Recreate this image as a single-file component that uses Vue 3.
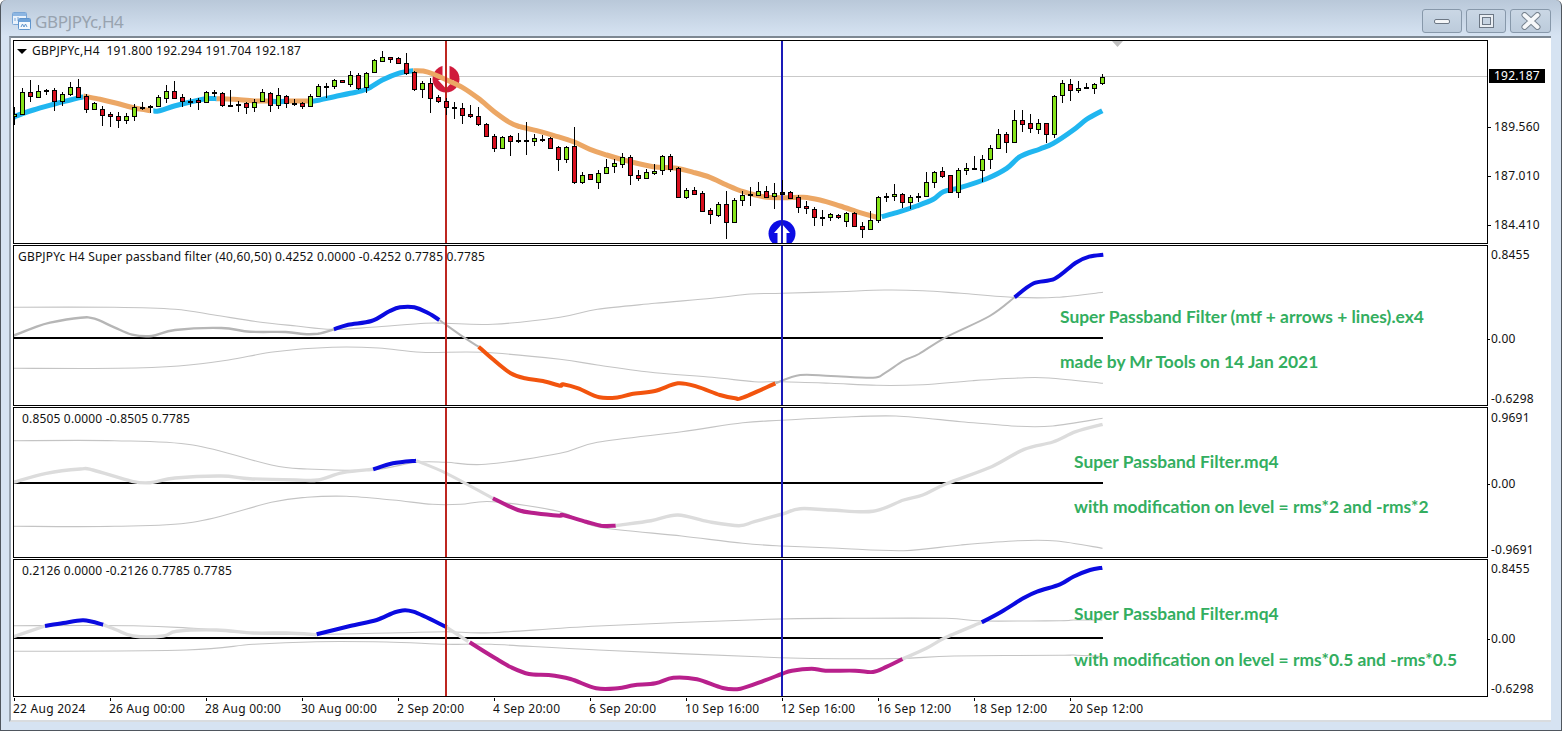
<script setup>
const sx = (ox, kx, oy) => (pts) => pts.map(([x, y]) => [x / kx + ox, y / 3 + oy])
const z1 = sx(0, 3, 0), z3 = sx(520, 3, 60), z2 = sx(1040, 3, 0)
const a6 = sx(0, 2.8, 240), a7 = sx(540, 2.613, 240)
const b4 = sx(0, 3, 540), b9 = sx(440, 2.529, 550), b5 = sx(1040, 3, 540)
// Catmull-Rom through the sampled points, so curves read as smooth indicator lines
const pts = (p) => {
  const f = (v) => v.toFixed(1)
  let d = `M${f(p[0][0])} ${f(p[0][1])}`
  for (let i = 0; i < p.length - 1; i++) {
    const a = p[Math.max(i - 1, 0)], b = p[i], c = p[i + 1], e = p[Math.min(i + 2, p.length - 1)]
    d += `C${f(b[0] + (c[0] - a[0]) / 6)} ${f(b[1] + (c[1] - a[1]) / 6)} ${f(c[0] - (e[0] - b[0]) / 6)} ${f(c[1] - (e[1] - b[1]) / 6)} ${f(c[0])} ${f(c[1])}`
  }
  return d
}

// high, low, body top, body bottom, kind (0 up, 1 down, 2 doji) — in 3x reference coordinates
const candlesA = [[320,375,343,349,0],[265,345,275,343,0],[240,305,275,289,1],[255,295,274,290,0],[267,285,270,273,2],[265,332,271,304,1],[275,318,283,304,0],[247,287,262,281,0],[237,295,262,290,1],[283,338,289,328,1],[305,330,310,328,0],[318,377,328,344,1],[335,380,343,349,1],[335,383,349,361,1],[338,372,349,361,0],[313,362,322,349,0],[307,330,320,323,2],[315,340,319,322,2],[285,322,291,317,0],[255,308,274,295,0],[243,295,274,293,1],[283,320,292,302,1],[295,320,303,305,2],[295,330,301,307,1],[272,310,277,307,0],[270,292,276,279,2],[277,320,280,316,1],[270,322,314,317,2],[303,336,311,314,2],[305,341,309,322,1],[298,336,305,322,0],[268,305,277,304,0],[275,335,278,316,1],[265,328,286,316,0],[285,323,287,310,1],[298,318,309,311,2],[305,326,310,319,1],[283,322,287,319,0],[252,290,259,287,0],[250,293,258,260,2],[238,268,241,259,0],[240,248,241,246,1],[212,262,226,253,0],[218,270,226,263,1],[215,278,218,262,0],[178,220,181,217,0],[153,186,172,184,0],[170,188,172,178,1],[172,193,175,190,1],[160,224,190,218,1],[213,272,217,268,1],[243,293,250,268,0],[235,338,250,293,1],[285,310,291,304,1],[295,345,304,320,1],[305,358,320,322,2],[308,371,325,346,1],[315,355,343,349,1],[322,378,349,373,1],[370,412,373,409,1],[403,455,409,445,1],[408,448,412,445,0],[405,467,409,422,1],[398,428,421,424,2]]
const candlesB = [[185,285,241,244,2],[222,258,233,242,0],[225,245,236,238,2],[232,265,234,263,1],[258,333,262,296,1],[257,310,260,296,0],[200,373,259,365,1],[335,373,346,365,0],[343,358,343,356,1],[330,387,340,365,0],[297,341,320,340,0],[298,338,310,319,0],[280,324,292,311,0],[285,375,292,346,1],[330,362,346,353,1],[327,358,337,353,0],[312,345,332,338,0],[285,345,288,331,0],[283,335,288,326,1],[322,412,324,410,1],[385,418,391,410,0],[382,405,391,403,1],[392,457,400,452,1],[445,491,451,463,1],[425,470,433,464,0],[393,537,433,485,1],[415,487,420,485,0],[392,437,405,421,0],[380,437,403,405,2],[365,407,394,404,0],[378,415,394,411,1],[368,447,400,409,0],[360,402,397,401,2],[392,417,397,413,1],[405,458,411,440,1],[423,463,438,445,1],[442,497,448,472,1],[450,497,470,472,2],[458,482,463,472,0],[462,476,465,472,1],[455,500,460,482,0],[455,502,460,497,1],[487,533,497,506,1],[453,510,481,506,0],[408,490,412,481,0],[398,425,407,411,2],[372,422,403,409,0],[398,443,403,425,1],[405,447,412,425,0],[398,425,408,411,2],[336,412,367,409,0],[332,383,335,367,0],[322,355,334,347,1],[345,400,346,395,1],[323,413,331,395,0],[310,345,325,331,0],[288,328,325,327,2],[285,365,298,329,0],[255,327,265,298,0],[208,267,223,265,0],[215,278,223,245,1],[150,232,181,245,0],[150,215,181,191,1],[162,220,190,205,1],[177,222,190,208,0]]
const candlesC = [[368,428,370,403,1],[285,415,287,403,0],[240,310,250,286,0],[238,302,251,271,1],[243,280,263,271,0],[250,265,260,263,2],[250,281,251,265,0],[223,256,230,250,0]]

const candles = [...candlesA.map((c) => [c, 0]), ...candlesB.map((c) => [c, 60]), ...candlesC.map((c) => [c, 0])].map(([c, off], i) => {
  const y = (v) => v / 3 + off
  const cx = 14.5 + 8 * i
  const top = Math.round(y(c[2])) + 0.5
  const bot = Math.max(Math.round(y(c[3])) + 0.5, top + 1)
  return { cx, hi: Math.round(y(c[0])), lo: Math.round(y(c[1])), top, h: bot - top, fill: ['#86e41a', '#d80f1e', '#111'][c[4]] }
})

const BLUE_MA = '#20b6f0', ORANGE_MA = '#eca765'
const ma = [
  [BLUE_MA, z1([[40, 354], [43, 350], [100, 330], [163, 312], [211, 300], [250, 290]])],
  [ORANGE_MA, z1([[250, 288], [300, 298], [350, 310], [403, 324], [427, 328], [451, 332]])],
  [BLUE_MA, z1([[460, 332], [475, 333], [523, 318], [571, 306], [619, 296], [650, 296]])],
  [ORANGE_MA, z1([[650, 296], [700, 298], [763, 303], [811, 303]])],
  [BLUE_MA, z1([[811, 303], [835, 305], [860, 303]])],
  [ORANGE_MA, z1([[860, 303], [931, 303]])],
  [BLUE_MA, z1([[931, 305], [955, 301], [1003, 290], [1051, 280], [1099, 268], [1147, 240], [1195, 220], [1240, 212]])],
  [ORANGE_MA, [...z1([[1240, 212], [1270, 213], [1300, 222], [1340, 240], [1387, 262], [1435, 295], [1483, 335], [1530, 368], [1560, 380]]), ...z3([[50, 212], [100, 226], [160, 245], [210, 268], [260, 285], [330, 305], [400, 320], [470, 325], [520, 337], [570, 352], [620, 375], [670, 395], [730, 410], [790, 413], [850, 412], [900, 420], [960, 438], [1020, 458], [1070, 472]])]],
  [BLUE_MA, [...z3([[1085, 470], [1130, 458], [1190, 438], [1240, 418], [1270, 395], [1320, 383], [1400, 356], [1460, 325], [1500, 290], [1560, 267]]), ...z2([[40, 430], [100, 390], [140, 358], [187, 332]])]],
].map(([color, p]) => ({ color, d: pts(p) }))

const GREY = '#b6b6b6', LGREY = '#dcdcdc', BLUE = '#0a0ae0', ORANGE = '#f2540e', MAG = '#b8208c'

const curves2 = [
  [GREY, 2.4, a6([[37, 287], [90, 265], [140, 248], [225, 233], [265, 236], [320, 262], [370, 284], [425, 288], [490, 270], [620, 264], [700, 275], [800, 276], [850, 282], [890, 281], [935, 268]])],
  [BLUE, 4, a6([[935, 268], [975, 254], [1040, 243], [1090, 214], [1120, 202], [1160, 202], [1200, 220], [1230, 240]])],
  [GREY, 2, a6([[1230, 240], [1300, 293], [1340, 320]])],
  [ORANGE, 4, [...a6([[1340, 320], [1380, 358], [1430, 400], [1470, 415], [1520, 423], [1568, 437]]), ...a7([[60, 433], [100, 445], [155, 472], [205, 472], [240, 462], [300, 453], [360, 430], [410, 440], [470, 465], [510, 475], [530, 473], [615, 430]])]],
  [GREY, 2, a7([[615, 430], [680, 405], [760, 408], [870, 413], [900, 400], [950, 362], [990, 342], [1060, 292], [1175, 228], [1240, 172]])],
  [BLUE, 4, a7([[1240, 172], [1290, 130], [1345, 116], [1400, 68], [1435, 50], [1472, 44]])],
]
const levels2 = [
  [...a6([[37, 202], [320, 202], [490, 208], [600, 225], [720, 245], [830, 258], [930, 268], [1040, 262], [1190, 250], [1250, 250], [1380, 253], [1568, 232]]), ...a7([[150, 208], [300, 190], [450, 175], [550, 162], [633, 160], [780, 155], [900, 150], [1000, 152], [1100, 160], [1240, 172], [1350, 172], [1471, 157]])],
  [...a6([[37, 385], [330, 385], [500, 378], [640, 360], [770, 335], [930, 322], [1060, 324], [1180, 337], [1350, 337], [1568, 358]]), ...a7([[150, 375], [300, 398], [450, 412], [560, 425], [633, 425], [760, 430], [880, 436], [1000, 434], [1130, 422], [1250, 414], [1330, 414], [1471, 430]])],
]

const curves3 = [
  [LGREY, 3.4, a6([[37, 727], [130, 700], [225, 687], [260, 690], [370, 724], [420, 728], [490, 714], [620, 708], [700, 716], [830, 720], [890, 720], [960, 698], [1045, 688]])],
  [BLUE, 4, a6([[1045, 688], [1100, 670], [1165, 662]])],
  [LGREY, 3, a6([[1165, 662], [1250, 700], [1380, 775]])],
  [MAG, 4, [...a6([[1380, 775], [1450, 810], [1500, 820], [1568, 827]]), ...a7([[60, 825], [120, 845], [160, 857], [198, 857]])]],
  [LGREY, 3.4, a7([[198, 857], [290, 842], [360, 825], [440, 845], [520, 857], [560, 845], [633, 822], [680, 806], [760, 810], [870, 814], [950, 780], [1000, 765], [1060, 732], [1180, 680], [1265, 628], [1340, 606], [1400, 575], [1470, 553]])],
]
const levels3 = [
  [...a6([[37, 602], [320, 602], [540, 615], [760, 675], [860, 687], [1040, 690], [1165, 667], [1250, 667], [1360, 673], [1568, 640]]), ...a7([[150, 607], [370, 575], [530, 548], [633, 541], [780, 532], [930, 528], [1100, 545], [1250, 559], [1340, 558], [1470, 535]])],
  [...a6([[37, 859], [320, 859], [540, 847], [760, 787], [860, 772], [970, 769], [1100, 780], [1210, 793], [1290, 793], [1380, 785], [1568, 815]]), ...a7([[150, 860], [370, 888], [530, 910], [633, 918], [780, 925], [950, 932], [1100, 915], [1250, 902], [1350, 903], [1470, 925]])],
]

const curves4 = [
  [LGREY, 3.4, b4([[40, 290], [135, 258]])],
  [BLUE, 4, b4([[135, 258], [190, 249], [250, 241], [310, 254]])],
  [LGREY, 3.4, b4([[310, 254], [350, 270], [400, 288], [490, 288], [530, 274], [650, 270], [760, 279], [860, 279], [950, 284]])],
  [BLUE, 4, b4([[950, 283], [1050, 258], [1130, 240], [1190, 215], [1240, 215], [1340, 262]])],
  [LGREY, 3.4, b4([[1340, 262], [1405, 305]])],
  [MAG, 4, b9([[75, 277], [140, 325], [180, 352], [225, 372], [275, 375], [330, 387], [395, 415], [450, 415], [490, 406], [545, 400], [590, 383], [650, 388], [715, 414], [760, 416], [820, 392], [864, 372], [890, 362], [940, 356], [975, 362], [1050, 362], [1095, 366], [1130, 350], [1170, 327]])],
  [LGREY, 3.4, b9([[1170, 327], [1230, 295], [1280, 262], [1370, 217]])],
  [BLUE, 4, [...b9([[1370, 217], [1420, 185], [1475, 145], [1510, 125], [1568, 103]]), ...b5([[100, 110], [150, 90], [187, 83]])]],
]
const levels4 = [
  [...b4([[40, 257], [400, 257], [580, 265], [760, 280], [950, 283], [1200, 278], [1340, 275]]), ...b9([[130, 248], [400, 228], [830, 208], [1030, 205], [1280, 205], [1370, 213], [1568, 212]]), ...b5([[100, 240], [187, 240]])],
  [...b4([[40, 334], [560, 330], [760, 313], [950, 305], [1160, 306], [1340, 313]]), ...b9([[130, 283], [400, 300], [860, 323], [1060, 326], [1180, 325], [1300, 318], [1568, 316]]), ...b5([[100, 345], [187, 350]])],
]

const mk = (name, top, h, zero, legend, curves, levels, notes, labels) => ({
  name, top, h, zero, legend,
  vb: `14 ${top + 1} 1473 ${h - 2}`,
  curves: curves.map(([c, w, p]) => ({ c, w, d: pts(p) })),
  levels: levels.map((p) => pts(p)),
  notes: notes.map((n) => ({ ...n, top: n.y - top - 12, left: n.x - 14 })),
  labels: labels.map((l) => ({ ...l, top: l.y - top - 8 })),
})

const subPanes = [
  mk('p2', 245, 161, 338, 'GBPJPYc H4 Super passband filter (40,60,50) 0.4252 0.0000 -0.4252 0.7785 0.7785', curves2, levels2,
    [{ t: 'Super Passband Filter (mtf + arrows + lines).ex4', x: 1060, y: 317 }, { t: 'made by Mr Tools on 14 Jan 2021', x: 1060, y: 362 }],
    [{ t: '0.8455', y: 255 }, { t: '0.00', y: 338.5, tick: true }, { t: '-0.6298', y: 399 }]),
  mk('p3', 407, 151, 483, '0.8505 0.0000 -0.8505 0.7785', curves3, levels3,
    [{ t: 'Super Passband Filter.mq4', x: 1074, y: 462 }, { t: 'with modification on level = rms*2 and -rms*2', x: 1074, y: 507 }],
    [{ t: '0.9691', y: 417.5 }, { t: '0.00', y: 483.5, tick: true }, { t: '-0.9691', y: 549.5 }]),
  mk('p4', 559, 138, 638, '0.2126 0.0000 -0.2126 0.7785 0.7785', curves4, levels4,
    [{ t: 'Super Passband Filter.mq4', x: 1074, y: 614 }, { t: 'with modification on level = rms*0.5 and -rms*0.5', x: 1074, y: 660 }],
    [{ t: '0.8455', y: 568.5 }, { t: '0.00', y: 639, tick: true }, { t: '-0.6298', y: 689 }]),
]

const priceLabels = [
  { t: '189.560', top: 126.5 - 48 },
  { t: '187.010', top: 175.5 - 48 },
  { t: '184.410', top: 224.5 - 48 },
]
const times = ['22 Aug 2024', '26 Aug 00:00', '28 Aug 00:00', '30 Aug 00:00', '2 Sep 20:00', '4 Sep 20:00', '6 Sep 20:00', '10 Sep 16:00', '12 Sep 16:00', '16 Sep 12:00', '18 Sep 12:00', '20 Sep 12:00']
</script>

<template>
  <div class="window">
    <header class="titlebar">
      <svg class="app-icon" width="19" height="18" viewBox="0 0 19 18">
        <rect x="0.5" y="0.5" width="14" height="12" rx="1" fill="#eaf2fb" stroke="#7aa6d6" />
        <rect x="1" y="1" width="13" height="3" fill="#8db6e2" />
        <path d="M3 9V6M6 9V5M9 9V6" stroke="#7aa6d6" fill="none" />
        <rect x="6.5" y="6.5" width="12" height="11" rx="1" fill="#f5f9fd" stroke="#5f94cc" />
        <rect x="7" y="7" width="11" height="3" fill="#6fa2d8" />
        <path d="M9 15l1.5-3 1.5 3 1.5-3 1.5 3" stroke="#5f94cc" fill="none" />
      </svg>
      <span class="title">GBPJPYc,H4</span>
      <div class="buttons">
        <button class="btn" type="button" aria-label="Minimize"><span class="min-glyph"></span></button>
        <button class="btn" type="button" aria-label="Maximize"><span class="max-glyph"></span></button>
        <button class="btn close" type="button" aria-label="Close">
          <svg width="20" height="18" viewBox="0 0 20 18">
            <path d="M3.5 3l13 12M16.5 3l-13 12" stroke="#77838f" stroke-width="6" stroke-linecap="round" fill="none" />
            <path d="M3.5 3l13 12M16.5 3l-13 12" stroke="#f6f8fa" stroke-width="4" stroke-linecap="round" fill="none" />
          </svg>
        </button>
      </div>
    </header>

    <main class="client">
      <section class="pane p1">
        <div class="plot">
          <svg class="chart" width="1473" height="202" viewBox="14 41 1473 202">
            <line x1="14" x2="1487" y1="76.5" y2="76.5" stroke="#c9c9c9" />
            <circle cx="446" cy="79" r="13.5" fill="#d01b3c" />
            <path d="M442.5 65H449.5V80H454L446 88.5L438 80H442.5Z" fill="#fff" />
            <circle cx="782" cy="233.5" r="13.5" fill="#0c0ce4" />
            <path d="M782 224L790 233H786.5V248H777.5V233H774Z" fill="#fff" />
            <path v-for="(m, i) in ma" :key="i" :d="m.d" :stroke="m.color" stroke-width="5" fill="none" stroke-linejoin="round" />
            <line x1="446" x2="446" y1="40" y2="244" class="v-red" />
            <line x1="782" x2="782" y1="40" y2="244" class="v-blue" />
            <g v-for="(c, i) in candles" :key="i">
              <line :x1="c.cx" :x2="c.cx" :y1="c.hi" :y2="c.lo" stroke="#000" />
              <rect :x="c.cx - 2" :y="c.top" width="4" :height="c.h" :fill="c.fill" stroke="#000" />
            </g>
            <path d="M1112 41H1123L1117.5 47Z" fill="#bfbfbf" />
          </svg>
          <div class="legend main-legend"><i class="caret"></i>GBPJPYc,H4&nbsp; 191.800 192.294 191.704 192.187</div>
        </div>
        <div class="axis price-axis">
          <span class="last-price">192.187</span>
          <span v-for="l in priceLabels" :key="l.t" class="price" :style="{ top: l.top + 'px' }">{{ l.t }}</span>
        </div>
      </section>

      <section v-for="p in subPanes" :key="p.name" class="pane" :class="p.name">
        <div class="plot">
          <svg class="chart" width="1473" :height="p.h - 2" :viewBox="p.vb">
            <path v-for="(l, i) in p.levels" :key="i" :d="l" stroke="#c4c4c4" stroke-width="1.1" fill="none" />
            <line x1="14" x2="1103" :y1="p.zero" :y2="p.zero" stroke="#000" stroke-width="2" />
            <path v-for="(c, i) in p.curves" :key="i" :d="c.d" :stroke="c.c" :stroke-width="c.w" fill="none" stroke-linejoin="round" />
            <line x1="446" x2="446" :y1="p.top" :y2="p.top + p.h" class="v-red" />
            <line x1="782" x2="782" :y1="p.top" :y2="p.top + p.h" class="v-blue" />
          </svg>
          <div class="legend sub-legend">{{ p.legend }}</div>
          <div v-for="n in p.notes" :key="n.t" class="note" :style="{ top: n.top + 'px', left: n.left + 'px' }">{{ n.t }}</div>
        </div>
        <div class="axis">
          <span v-for="l in p.labels" :key="l.t" class="value" :class="{ tick: l.tick }" :style="{ top: l.top + 'px' }">{{ l.t }}</span>
        </div>
      </section>

      <footer class="time-axis">
        <span v-for="t in times" :key="t" class="time"><b>{{ t }}</b></span>
      </footer>
    </main>
  </div>
</template>

<style scoped>
.window {
  width: 1562px;
  height: 731px;
  box-sizing: border-box;
  display: flex;
  flex-direction: column;
  padding: 0 10px 8px 8px;
  border: 1px solid #4f565e;
  border-top: 0;
  border-radius: 6px 6px 0 0;
  background: linear-gradient(#b9c8d9 0, #d6e3f2 36px, #d6e3f2 100%);
  font-family: "Noto Sans", sans-serif;
  color: #111;
}
.titlebar {
  height: 36px;
  flex: none;
  display: flex;
  align-items: flex-start;
}
.app-icon {
  margin: 12px 0 0 3px;
}
.title {
  margin: 10px 0 0 4px;
  font-size: 17px;
  line-height: 24px;
  color: #98a3af;
  letter-spacing: -0.4px;
}
.buttons {
  margin: 9px 0 0 auto;
  display: flex;
  gap: 4px;
}
.btn {
  width: 40px;
  height: 24px;
  padding: 0;
  display: flex;
  align-items: center;
  justify-content: center;
  border: 1px solid #8798aa;
  border-radius: 3px;
  background: linear-gradient(#cad7e5, #bccbdb);
}
.btn.close {
  width: 41px;
}
.min-glyph {
  width: 16px;
  height: 5px;
  border: 1px solid #6c7784;
  border-radius: 2px;
  background: #f4f6f8;
  box-sizing: border-box;
}
.max-glyph {
  width: 15px;
  height: 14px;
  box-sizing: border-box;
  border: 3px solid #e9edf2;
  outline: 1px solid #6c7784;
  outline-offset: -1px;
  box-shadow: inset 0 0 0 1px #6c7784;
  background: #c6d3e1;
}
.client {
  flex: 1;
  display: flex;
  flex-direction: column;
  gap: 1px;
  padding: 2px 0 0 2px;
  background: #fff;
  border-top: 2px solid #7c8792;
  border-left: 2px solid #98a3af;
  border-bottom: 2px solid #d9dcdf;
}
.pane {
  display: grid;
  grid-template-columns: 1475px 63px;
  flex: none;
}
.p1 { height: 204px; }
.p2 { height: 161px; }
.p3 { height: 151px; }
.p4 { height: 138px; }
.plot {
  position: relative;
  box-sizing: border-box;
  border: 1px solid #000;
  overflow: hidden;
}
.chart {
  display: block;
}
.v-red {
  stroke: #bd2620;
  stroke-width: 2;
}
.v-blue {
  stroke: #1a1ab8;
  stroke-width: 2;
}
.legend {
  position: absolute;
  font-size: 12px;
  line-height: 14px;
  letter-spacing: 0.17px;
  white-space: nowrap;
}
.main-legend {
  top: 3px;
  left: 3px;
  display: flex;
  align-items: center;
  letter-spacing: 0.25px;
}
.caret {
  width: 0;
  height: 0;
  margin-right: 5px;
  border: 5px solid transparent;
  border-top: 5px solid #000;
  border-bottom: 0;
}
.sub-legend {
  top: 4px;
  left: 4px;
}
.p3 .sub-legend,
.p4 .sub-legend {
  left: 8px;
}
.note {
  position: absolute;
  font-family: Lato, sans-serif;
  font-weight: 700;
  font-size: 17.4px;
  line-height: 22px;
  color: #33ae60;
  white-space: nowrap;
}
.axis {
  position: relative;
  font-size: 12px;
  letter-spacing: 0.2px;
}
.price,
.last-price,
.value {
  position: absolute;
  line-height: 16px;
  white-space: nowrap;
}
.price {
  left: 6px;
}
.price::before {
  content: "";
  position: absolute;
  left: -6px;
  top: 8px;
  width: 3px;
  height: 1px;
  background: #000;
}
.last-price {
  top: 29px;
  left: 1px;
  width: 56px;
  height: 14px;
  line-height: 14px;
  box-sizing: border-box;
  padding-left: 5px;
  background: #000;
  color: #fff;
}
.value {
  left: 3px;
}
.value.tick::before {
  content: "";
  position: absolute;
  left: -3px;
  top: 8px;
  width: 2px;
  height: 1px;
  background: #000;
}
.time-axis {
  flex: 1;
  display: flex;
  padding-left: 1px;
  font-size: 12px;
  letter-spacing: 0.25px;
}
.time {
  position: relative;
  width: 96px;
  flex: none;
  padding-top: 3px;
  line-height: 16px;
  white-space: nowrap;
}
.time b {
  font-weight: 400;
  margin-left: -1px;
}
.time::before {
  content: "";
  position: absolute;
  left: 0;
  top: 0;
  width: 1px;
  height: 3px;
  background: #000;
}
</style>

<style>
html, body {
  margin: 0;
  background: #fff;
  overflow: hidden;
}
</style>
